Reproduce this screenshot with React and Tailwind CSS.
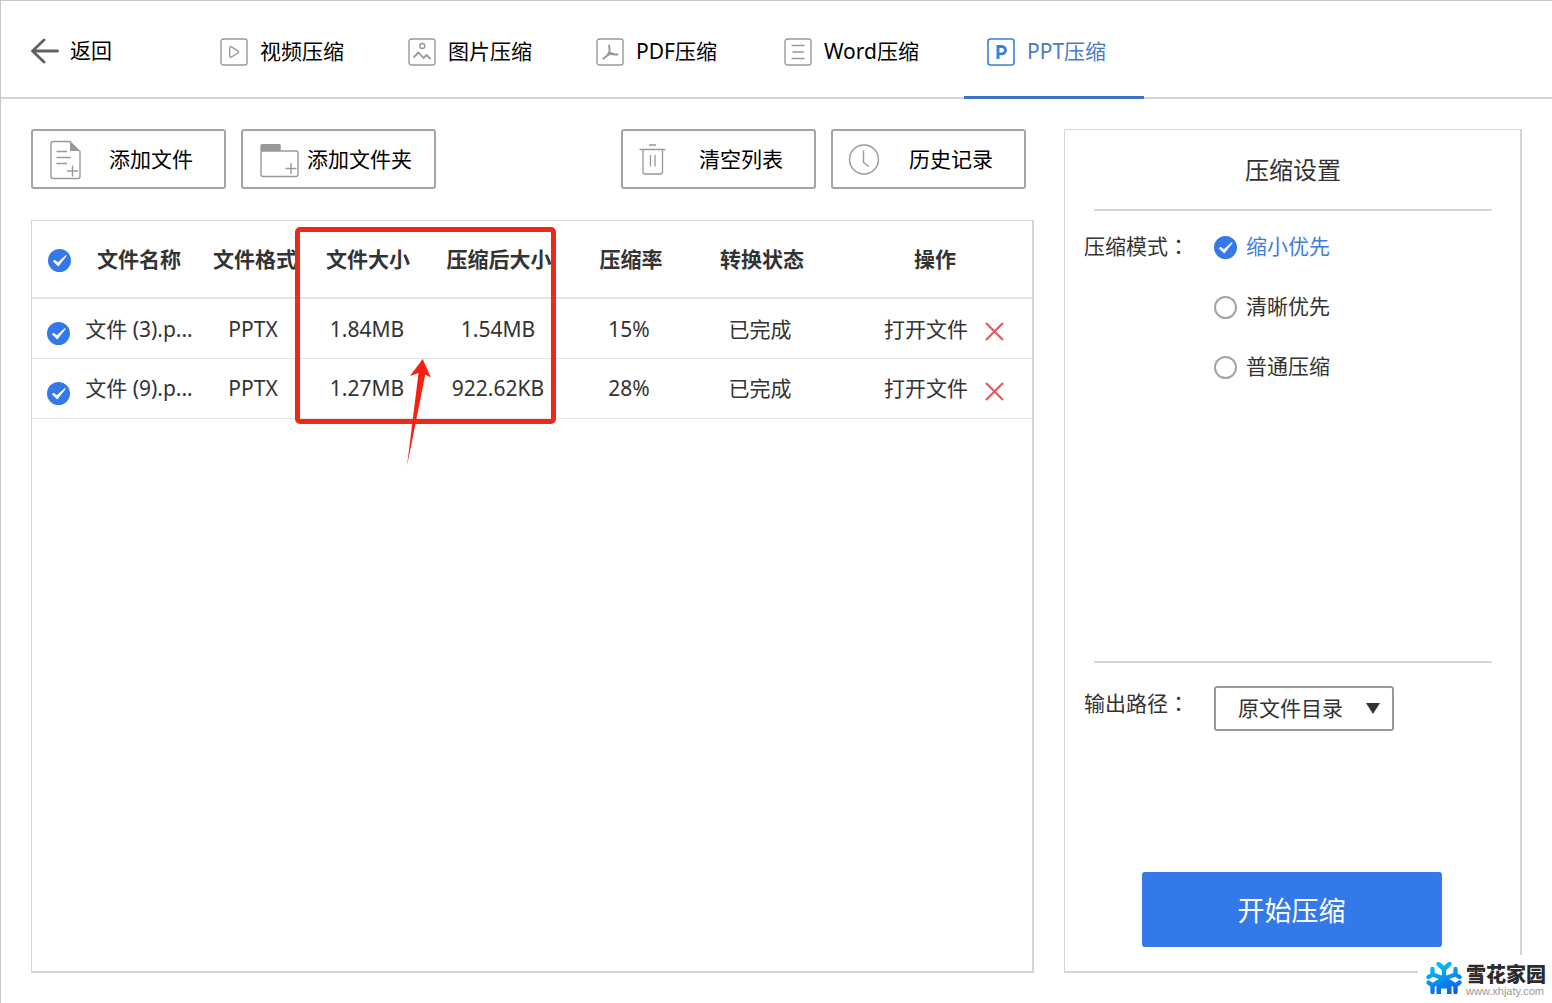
import React, { useState } from 'react';
import clsx from 'clsx';

const VideoIcon = () => (
  <svg className="w-7 h-7 shrink-0" viewBox="0 0 28 28" fill="none" stroke="#999" strokeWidth="1.4">
    <rect x="1" y="1" width="26" height="26" rx="2.5" />
    <path d="M9.700 10c0-1.400.9-1.800 1.900-1.200l6.200 4c.9.600.9 1.600 0 2.200l-6.200 4c-1 .6-1.900.2-1.900-1.200z" />
  </svg>
);

const ImageIcon = () => (
  <svg className="w-7 h-7 shrink-0" viewBox="0 0 28 28" fill="none" stroke="#999" strokeWidth="1.4">
    <rect x="1" y="1" width="26" height="26" rx="2.5" />
    <circle cx="14.300" cy="8" r="2.500" />
    <path d="M5.500 19.500l5-5 5 5.500 3-3 4.200 4.200" strokeLinejoin="round" strokeWidth="1.800" />
  </svg>
);

const PdfIcon = () => (
  <svg className="w-7 h-7 shrink-0" viewBox="0 0 28 28" fill="none" stroke="#999" strokeWidth="1.4">
    <rect x="1" y="1" width="26" height="26" rx="2.5" />
    <path d="M13 7.500c.8 3 .9 5 .2 7-1.200 2.500-3.500 4.700-6 6.300M13.200 14c2 2 4.500 2.800 8.300 2.500M11 17.500c2-1.300 4.500-1.900 7-1.600" strokeLinecap="round" strokeWidth="1.900" />
  </svg>
);

const WordIcon = () => (
  <svg className="w-7 h-7 shrink-0" viewBox="0 0 28 28" fill="none" stroke="#999" strokeWidth="1.4">
    <rect x="1" y="1" width="26" height="26" rx="2.5" />
    <path d="M7.500 7.500h13M8.500 14h11.500M7.500 20.500h13" />
  </svg>
);

const PptIcon = () => (
  <svg className="w-7 h-7 shrink-0" viewBox="0 0 28 28" fill="none" stroke="#3a7fd8" strokeWidth="1.6">
    <rect x="1" y="1" width="26" height="26" rx="2.5" />
    <path d="M11 21V8.500h3.800a3.600 3.600 0 0 1 0 7.400H11" strokeWidth="2.900" />
  </svg>
);

const BackIcon = () => (
  <svg className="w-7 h-7 shrink-0" viewBox="0 0 28 28" fill="none" stroke="#606060" strokeWidth="2.800" strokeLinecap="round" strokeLinejoin="round">
    <path d="M13 3L1.500 14 13 25M1.500 14h25" />
  </svg>
);

const AddFileIcon = () => (
  <svg className="w-10 h-10 shrink-0" viewBox="0 0 40 40" fill="none" stroke="#999" strokeWidth="1.4">
    <path d="M25.500 1.500H8a2 2 0 0 0-2 2v33a2 2 0 0 0 2 2h25a2 2 0 0 0 2-2V11" />
    <path d="M25 .8v10.200h10.500z" fill="#999" stroke="none" />
    <path d="M11.500 11.500h10.500M11.500 17.500h14M11.500 23.500h10.500M22 31h11M27.500 25.500v11" />
  </svg>
);

const AddFolderIcon = () => (
  <svg className="w-10 h-10 shrink-0" viewBox="0 0 40 40" fill="none" stroke="#999" strokeWidth="1.4">
    <rect x="2" y="11" width="37" height="25.500" rx="2" />
    <path d="M1.300 5.500a1.500 1.500 0 0 1 1.500-1.500h17.500a1.500 1.500 0 0 1 1.500 1.500v5.500H1.300z" fill="#999" stroke="none" />
    <path d="M26.500 28.500h11M32 23v11" />
  </svg>
);

const TrashIcon = () => (
  <svg className="w-10 h-10 shrink-0" viewBox="0 0 40 40" fill="none" stroke="#999" strokeWidth="1.3">
    <path d="M4.500 9.500h26M14 5h7M8 10v22a2 2 0 0 0 2 2h15.500a2 2 0 0 0 2-2V10M15.500 15v11.500M20 15v11.500" />
  </svg>
);

const ClockIcon = () => (
  <svg className="w-10 h-10 shrink-0" viewBox="0 0 40 40" fill="none" stroke="#999" strokeWidth="1.400">
    <circle cx="19" cy="19.500" r="14.500" />
    <path d="M18.500 10.500v12l5.500 4" />
  </svg>
);

const SnowflakeLogo = () => (
  <svg className="w-9 h-9 shrink-0" viewBox="0 0 36 36" fill="none">
    <defs>
      <linearGradient id="snow" x1="10" y1="2" x2="22" y2="34" gradientUnits="userSpaceOnUse">
        <stop stopColor="#08c4f8" />
        <stop offset="1" stopColor="#0a5cf0" />
      </linearGradient>
    </defs>
    <g stroke="url(#snow)" strokeWidth="4.4" strokeLinejoin="round">
      <path d="M12.500 3l5.500 5 5.500-5" strokeLinecap="round" />
      <path d="M18 7v11" />
      <path d="M6.500 8v5.500L2.500 16M29.500 8v5.500l4 2.500" strokeLinecap="round" />
      <path d="M6.500 13.500L18 17.500l11.500-4M6.500 24.500L18 17.500l11.500 7" />
      <path d="M2.500 21.500l4 3V31M33.500 21.500l-4 3V31" strokeLinecap="round" />
    </g>
    <path d="M10.500 23.500L18 17l7.500 6.500V33h-4.500v-5.500h-6V33h-4.500z" fill="url(#snow)" />
  </svg>
);

const tabs = [
  { id: 'video', label: '视频压缩', icon: VideoIcon },
  { id: 'image', label: '图片压缩', icon: ImageIcon },
  { id: 'pdf', label: 'PDF压缩', icon: PdfIcon },
  { id: 'word', label: 'Word压缩', icon: WordIcon },
  { id: 'ppt', label: 'PPT压缩', icon: PptIcon },
];

const initialFiles = [
  { id: 3, name: '文件 (3).p...', format: 'PPTX', size: '1.84MB', after: '1.54MB', rate: '15%', status: '已完成' },
  { id: 9, name: '文件 (9).p...', format: 'PPTX', size: '1.27MB', after: '922.62KB', rate: '28%', status: '已完成' },
];

const modes = ['缩小优先', '清晰优先', '普通压缩'];

// Round tick used for both the row check boxes and the mode radios
const RoundCheck = ({ type = 'checkbox', ...props }) => (
  <span className="inline-grid shrink-0 align-middle">
    <input
      type={type}
      className="peer col-start-1 row-start-1 w-[23px] h-[23px] appearance-none rounded-full border-2 border-[#a4a4a4] checked:border-[#3479e9] checked:bg-[#3479e9]"
      {...props}
    />
    <svg className="col-start-1 row-start-1 w-[23px] h-[23px] pointer-events-none hidden peer-checked:block" viewBox="0 0 23 23" fill="white">
      <path d="M4.800 12.300l1.800-1.600 3.300 2.600 8-7.300.9.700-8.500 10.800z" />
    </svg>
  </span>
);

const ToolButton = ({ icon: Icon, children, wide }) => (
  <button type="button" className="flex items-center w-[195px] h-[60px] pl-3 pt-px border-2 border-[#a4a4a4] rounded-[3px] text-black">
    <span className={clsx('flex', wide && 'pl-1')}>
      <Icon />
    </span>
    <span className={clsx('whitespace-nowrap', wide ? 'pl-2' : 'pl-6')}>{children}</span>
  </button>
);

const FieldName = ({ id, htmlFor, children }) => {
  const Tag = htmlFor ? 'label' : 'span';
  return (
    <Tag id={id} htmlFor={htmlFor} className="block w-[130px] shrink-0 leading-8">
      {children}
      <span className="font-['Noto_Sans_CJK_TC',sans-serif]">：</span>
    </Tag>
  );
};

const App = () => {
  const [activeTab, setActiveTab] = useState('ppt');
  const [files, setFiles] = useState(initialFiles);
  const [selected, setSelected] = useState([3, 9]);
  const [mode, setMode] = useState(modes[0]);

  const allSelected = files.length > 0 && files.every((f) => selected.includes(f.id));

  const toggleFile = (id) => {
    setSelected(selected.includes(id) ? selected.filter((s) => s !== id) : [...selected, id]);
  };

  return (
    <div className="relative min-h-screen flex flex-col bg-white border-t border-l border-[#c8c8c8] text-[21px] text-[#333] font-['Noto_Sans','Noto_Sans_CJK_SC',sans-serif]">
      <header className="flex h-[98px] pl-[30px] border-b-2 border-[#d5d5d5] text-black">
        <button type="button" className="flex items-center gap-[11px] w-[181px] pt-1">
          <BackIcon />
          返回
        </button>
        <nav className="flex gap-2">
          {tabs.map(({ id, label, icon: Icon }) => (
            <button
              key={id}
              type="button"
              onClick={() => setActiveTab(id)}
              className={clsx(
                'flex items-center gap-3 w-[180px] -mb-0.5 pt-1.5 border-b-3 whitespace-nowrap',
                activeTab === id ? 'pl-[23px] border-[#3c73c8] text-[#4878c8]' : 'pl-2 border-transparent'
              )}
            >
              <Icon />
              {label}
            </button>
          ))}
        </nav>
      </header>

      <main className="flex-1 flex gap-[30px] p-[30px]">
        <section className="flex-1 min-w-0 flex flex-col gap-[31px]">
          <div className="flex justify-between pr-2">
            <div className="flex gap-[15px]">
              <ToolButton icon={AddFileIcon}>添加文件</ToolButton>
              <ToolButton icon={AddFolderIcon} wide>添加文件夹</ToolButton>
            </div>
            <div className="flex gap-[15px]">
              <ToolButton icon={TrashIcon}>清空列表</ToolButton>
              <ToolButton icon={ClockIcon}>历史记录</ToolButton>
            </div>
          </div>

          <div className="relative flex-1 border border-r-2 border-b-2 border-[#d5d5d5]">
            <table className="w-full table-fixed text-center whitespace-nowrap">
              <colgroup>
                <col className="w-[46px]" />
                <col className="w-[122px]" />
                <col className="w-[106px]" />
                <col className="w-[122px]" />
                <col className="w-[140px]" />
                <col className="w-[122px]" />
                <col className="w-[140px]" />
                <col />
              </colgroup>
              <thead>
                <tr className="h-[77px] border-b-2 border-[#e4e4e4]">
                  <th className="pl-2">
                    <RoundCheck aria-label="全选" checked={allSelected} onChange={() => setSelected(allSelected ? [] : files.map((f) => f.id))} />
                  </th>
                  <th className="pt-0.5">文件名称</th>
                  <th className="pt-0.5 pl-1">文件格式</th>
                  <th className="pt-0.5 pl-0.5">文件大小</th>
                  <th className="pt-0.5 pl-0.5">压缩后大小</th>
                  <th className="pt-0.5 pl-1">压缩率</th>
                  <th className="pt-0.5 pl-1">转换状态</th>
                  <th className="pt-0.5 pl-2">操作</th>
                </tr>
              </thead>
              <tbody>
                {files.map((file) => (
                  <tr key={file.id} className="h-[60px] border-b border-[#e4e4e4]">
                    <td className="pl-1.5 pt-2">
                      <RoundCheck aria-label={file.name} checked={selected.includes(file.id)} onChange={() => toggleFile(file.id)} />
                    </td>
                    <td className="pt-0.5">{file.name}</td>
                    <td className="pt-0.5">{file.format}</td>
                    <td className="pt-0.5">{file.size}</td>
                    <td className="pt-0.5">{file.after}</td>
                    <td className="pt-0.5">{file.rate}</td>
                    <td className="pt-0.5">{file.status}</td>
                    <td className="pl-[26px] pt-0.5">
                      <div className="flex items-center justify-center gap-[17px]">
                        <button type="button">打开文件</button>
                        <button type="button" aria-label="删除" className="pt-1" onClick={() => setFiles(files.filter((f) => f.id !== file.id))}>
                          <svg className="w-[19px] h-[19px]" viewBox="0 0 19 19" fill="none" stroke="#dc5c60" strokeWidth="2.200">
                            <path d="M1 1l17 17M18 1L1 18" />
                          </svg>
                        </button>
                      </div>
                    </td>
                  </tr>
                ))}
              </tbody>
            </table>

            {/* Callout around the two size columns */}
            <div className="absolute left-[263px] top-[6px] w-[261px] h-[197px] border-5 border-[#ec2a1c] rounded-[5px] pointer-events-none" />
            <svg className="absolute left-[374px] top-[138px] w-[28px] h-[108px] pointer-events-none" viewBox="0 0 28 108" fill="#f5200f">
              <path d="M16.700 0L24.900 18.500 19.300 15.500 1 107 12.500 14 4 17z" />
            </svg>
          </div>
        </section>

        <aside className="w-[458px] shrink-0 flex flex-col border border-r-2 border-b-2 border-[#d5d5d5]">
          <h2 className="flex items-center justify-center h-[81px] ml-[29px] mr-7 border-b-2 border-[#d5d5d5] text-2xl">压缩设置</h2>

          <div className="flex-1 flex pl-[19px] pt-[6px]">
            <div className="pt-3">
              <FieldName id="mode-name">压缩模式</FieldName>
            </div>
            <div role="radiogroup" aria-labelledby="mode-name">
              {modes.map((item) => (
                <label key={item} className={clsx('flex items-center gap-[9px] h-[60px]', mode === item && 'text-[#3f7cd6]')}>
                  <RoundCheck type="radio" name="mode" checked={mode === item} onChange={() => setMode(item)} />
                  {item}
                </label>
              ))}
            </div>
          </div>

          <div className="ml-[29px] mr-7 border-t-2 border-[#d5d5d5]" />

          <div className="flex items-start pl-[19px] pt-[23px]">
            <FieldName htmlFor="output">输出路径</FieldName>
            <div className="grid items-center">
              <select id="output" className="col-start-1 row-start-1 w-[180px] h-[45px] pl-[22px] appearance-none bg-white border-2 border-[#999] rounded-[3px]">
                <option>原文件目录</option>
                <option>自定义目录</option>
              </select>
              <svg className="col-start-1 row-start-1 justify-self-end mr-[14px] w-[14px] h-[11px] pointer-events-none" viewBox="0 0 14 11" fill="#333">
                <path d="M0 0h14L7 11z" />
              </svg>
            </div>
          </div>

          <div className="flex justify-center pt-[141px] pb-6 pr-0.5">
            <button type="button" className="w-[300px] h-[75px] pt-1 bg-[#3479e9] rounded-[3px] text-white text-[27px]">开始压缩</button>
          </div>
        </aside>
      </main>

      <footer className="absolute right-0 bottom-0 flex items-center gap-1 w-[134px] h-12 pl-2 bg-white">
        <SnowflakeLogo />
        <div className="pt-1 whitespace-nowrap">
          <p className="text-xl leading-5 font-black text-[#2b2b2b]">雪花家园</p>
          <p className="text-[11px] leading-3 text-[#999] font-['Liberation_Sans',sans-serif]">www.xhjaty.com</p>
        </div>
      </footer>
    </div>
  );
};

export default App;
